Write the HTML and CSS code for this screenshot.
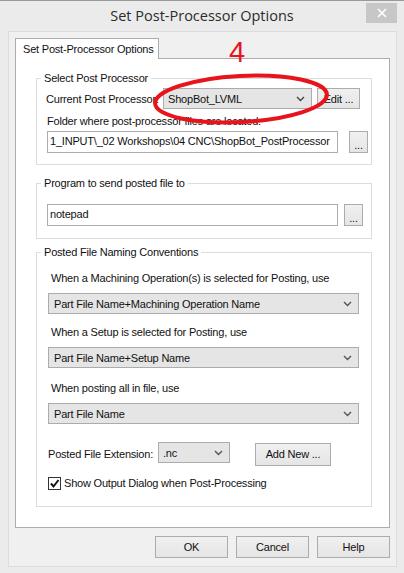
FILE: index.html
```html
<!DOCTYPE html>
<html>
<head>
<meta charset="utf-8">
<link rel="stylesheet" href="styles.css">
</head>
<body>
<div class="window">
  <div class="titlebar">
    <span></span>
    <div class="title">Set Post-Processor Options</div>
    <div class="close"><svg width="10" height="10" viewBox="0 0 10 10"><path d="M1 1L9 9M9 1L1 9" stroke="#fff" stroke-width="1.6"/></svg></div>
  </div>
  <div class="client">
    <div class="tabstrip"><div class="tab">Set Post-Processor Options</div></div>
    <div class="pane">
      <fieldset class="group g1">
        <legend>Select Post Processor</legend>
        <div class="row">
          <span class="lbl cur">Current Post Processor:</span>
          <div class="combo c-pp"><span>ShopBot_LVML</span><svg class="arr" width="9" height="6" viewBox="0 0 9 6"><path d="M1 1L4.5 4.5L8 1" fill="none" stroke="#444" stroke-width="1.4"/></svg></div>
          <button class="btn edit">Edit ...</button>
        </div>
        <div class="lbl folder">Folder where post-processor files are located:</div>
        <div class="row">
          <div class="textbox">1_INPUT\_02 Workshops\04 CNC\ShopBot_PostProcessor</div>
          <button class="btn dots">...</button>
        </div>
      </fieldset>
      <fieldset class="group g2">
        <legend>Program to send posted file to</legend>
        <div class="row">
          <div class="textbox">notepad</div>
          <button class="btn dots">...</button>
        </div>
      </fieldset>
      <fieldset class="group g3">
        <legend>Posted File Naming Conventions</legend>
        <div class="lbl q q1">When a Machining Operation(s) is selected for Posting, use</div>
        <div class="combo wide"><span>Part File Name+Machining Operation Name</span><svg class="arr" width="9" height="6" viewBox="0 0 9 6"><path d="M1 1L4.5 4.5L8 1" fill="none" stroke="#555" stroke-width="1.4"/></svg></div>
        <div class="lbl q q2">When a Setup is selected for Posting, use</div>
        <div class="combo wide"><span>Part File Name+Setup Name</span><svg class="arr" width="9" height="6" viewBox="0 0 9 6"><path d="M1 1L4.5 4.5L8 1" fill="none" stroke="#555" stroke-width="1.4"/></svg></div>
        <div class="lbl q q3">When posting all in file, use</div>
        <div class="combo wide"><span>Part File Name</span><svg class="arr" width="9" height="6" viewBox="0 0 9 6"><path d="M1 1L4.5 4.5L8 1" fill="none" stroke="#555" stroke-width="1.4"/></svg></div>
        <div class="row ext">
          <span class="lbl">Posted File Extension:</span>
          <div class="combo c-ext"><span>.nc</span><svg class="arr" width="9" height="6" viewBox="0 0 9 6"><path d="M1 1L4.5 4.5L8 1" fill="none" stroke="#555" stroke-width="1.4"/></svg></div>
          <button class="btn addnew">Add New ...</button>
        </div>
        <div class="row check">
          <span class="box"><svg width="11" height="11" viewBox="0 0 11 11"><path d="M2 5.5L4.5 8.5L9.5 2" fill="none" stroke="#111" stroke-width="2"/></svg></span>
          <span class="lbl">Show Output Dialog when Post-Processing</span>
        </div>
      </fieldset>
    </div>
    <div class="buttons">
      <button class="btn big">OK</button>
      <button class="btn big">Cancel</button>
      <button class="btn big">Help</button>
    </div>
  </div>
  <div class="annot">
    <div class="four">4</div>
    <svg class="ellipse" width="190" height="60" viewBox="0 0 190 60"><ellipse cx="95" cy="30" rx="86" ry="23" transform="rotate(-3 95 30)" fill="none" stroke="#e8141c" stroke-width="4"/></svg>
  </div>
</div>
</body>
</html>
```
FILE: styles.css
```css
* { box-sizing: border-box; }
html, body { margin: 0; padding: 0; }
body {
  width: 404px;
  height: 573px;
  overflow: hidden;
  background: #ececec;
  font-family: "Liberation Sans", Arial, sans-serif;
  font-size: 11px;
  letter-spacing: -0.2px;
  color: #111;
}
.window {
  position: relative;
  width: 404px;
  height: 573px;
  background: #ebebeb;
  border-top: 1px solid #9a9a9a;
}
.titlebar {
  height: 30px;
  display: grid;
  grid-template-columns: 1fr auto 1fr;
  align-items: start;
}
.title {
  font-family: "Open Sans", sans-serif;
  font-size: 14.5px;
  letter-spacing: 0;
  color: #2b2b2b;
  padding-top: 5px;
}
.close {
  justify-self: end;
  margin-top: 2px;
  margin-right: 7px;
  width: 31px;
  height: 20px;
  background: #c7c7c7;
  display: flex;
  align-items: center;
  justify-content: center;
}
.client {
  margin: 0 7px 0 8px;
  height: 536px;
  background: #f0f0f0;
  border: 1px solid #dcdcdc;
  padding: 6px 0 0 6px;
}
.tabstrip { display: flex; height: 20px; }
.tab {
  width: 144px;
  height: 21px;
  background: #fff;
  border: 1px solid #adadad;
  border-bottom: none;
  padding: 4px 0 0 7px;
  white-space: nowrap;
  position: relative;
  z-index: 1;
}
.pane {
  width: 375px;
  height: 470px;
  background: #fff;
  border: 1px solid #adadad;
  padding: 12px 17px 0 20px;
}
.group {
  margin: 0;
  border: 1px solid #dcdcdc;
  padding: 0;
  min-width: 0;
}
.group legend {
  padding: 0 3px;
  margin-left: -6px;
  line-height: 14px;
  height: 14px;
}
.g3 legend { margin-left: -7px; }
.lbl { line-height: 14px; white-space: nowrap; }
.row { display: flex; align-items: center; }
.g1 { padding: 3px 0 10px 10px; height: 94px; }
.g1 .row { gap: 5px; }
.cur { width: 112px; margin-left: -1px; }
.combo {
  height: 21px;
  background: #e5e5e5;
  border: 1px solid #acacac;
  display: flex;
  align-items: center;
  justify-content: space-between;
  padding: 0 6px 0 4px;
}
.c-pp { width: 149px; }
.btn {
  font-family: inherit;
  font-size: inherit;
  letter-spacing: inherit;
  color: #111;
  background: linear-gradient(#f0f0f0, #e5e5e5);
  border: 1px solid #acacac;
  border-radius: 0;
  padding: 0;
  margin: 0;
}
.edit { width: 43px; height: 21px; }
.folder { margin: 5px 0 3px 0; }
.textbox {
  width: 291px;
  height: 22px;
  border: 1px solid #acacac;
  background: #fff;
  padding: 3px 0 0 2px;
  white-space: nowrap;
  overflow: hidden;
}
.dots { width: 19px; height: 22px; margin-left: 6px; line-height: 26px; }
.g2 { margin-top: 11px; padding: 14px 0 11px 10px; height: 63px; }
.g3 { margin-top: 6px; padding: 12px 0 0 11px; height: 262px; }
.q { padding-left: 3px; }
.q2 { margin-top: 11px; }
.q3 { margin-top: 13px; }
.wide { width: 311px; margin-top: 8px; padding-left: 5px; }
.ext { margin-top: 18px; height: 24px; }
.ext .lbl { width: 110px; }
.c-ext { width: 72px; height: 21px; margin-top: -3px; }
.addnew { width: 76px; height: 23px; margin-left: 25px; }
.check { margin-top: 10px; gap: 3px; }
.box {
  width: 13px;
  height: 13px;
  border: 1px solid #333;
  background: #fff;
  display: flex;
  align-items: center;
  justify-content: center;
}
.buttons {
  display: flex;
  justify-content: flex-end;
  gap: 8px;
  width: 375px;
  margin-top: 8px;
}
.big { width: 73px; height: 22px; }
.annot .four {
  position: absolute;
  left: 229px;
  top: 35px;
  font-family: "Liberation Sans", Arial, sans-serif;
  font-size: 29px;
  letter-spacing: 0;
  color: #e8141c;
}
.annot .ellipse {
  position: absolute;
  left: 146px;
  top: 68px;
}
```
